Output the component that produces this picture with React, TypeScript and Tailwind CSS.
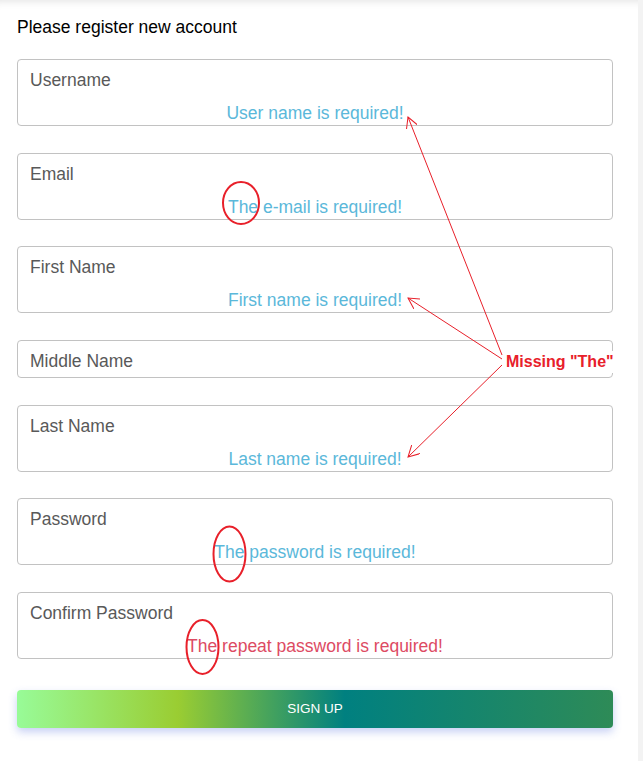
import React from "react";

type Field = { label: string; error?: string; tone?: "info" | "danger" };

const fields: Field[] = [
  { label: "Username", error: "User name is required!" },
  { label: "Email", error: "The e-mail is required!" },
  { label: "First Name", error: "First name is required!" },
  { label: "Middle Name" },
  { label: "Last Name", error: "Last name is required!" },
  { label: "Password", error: "The password is required!" },
  { label: "Confirm Password", error: "The repeat password is required!", tone: "danger" },
];

function FormField({ field }: { field: Field }) {
  return (
    <div
      className={
        field.error
          ? "flex flex-col border border-[#c2c2c2] rounded-[4px] pt-[10px] pb-[2px] px-[12px]"
          : "flex flex-col border border-[#c2c2c2] rounded-[4px] pt-[10px] pb-[6.5px] px-[12px]"
      }
    >
      <span className="text-[17.5px] leading-[20px] text-[#595959]">{field.label}</span>
      {field.error && (
        <span
          className={
            field.tone === "danger"
              ? "mt-[13px] text-center text-[17.5px] leading-[20px] text-[#dd4b63]"
              : "mt-[13px] text-center text-[17.5px] leading-[20px] text-[#5bb8da]"
          }
        >
          {field.error}
        </span>
      )}
    </div>
  );
}

// red review marks drawn on top of the form
function Annotations() {
  const red = "#e8202a";
  return (
    <svg className="absolute inset-0 pointer-events-none" width="643" height="761" viewBox="0 0 643 761">
      <defs>
        <marker id="arrow" viewBox="0 0 12 12" refX="11" refY="6" markerWidth="12" markerHeight="12" orient="auto-start-reverse" markerUnits="userSpaceOnUse">
          <path d="M0 0 L11 6 L0 12" fill="none" stroke={red} strokeWidth="1" />
        </marker>
      </defs>
      <g stroke={red} strokeWidth="1" fill="none">
        <line x1="502" y1="355" x2="408" y2="117" markerEnd="url(#arrow)" />
        <line x1="502" y1="359" x2="408" y2="298" markerEnd="url(#arrow)" />
        <line x1="502" y1="365" x2="408" y2="457" markerEnd="url(#arrow)" />
      </g>
      <g stroke={red} strokeWidth="2" fill="none">
        <ellipse cx="241" cy="203" rx="18" ry="21" />
        <ellipse cx="229.5" cy="554" rx="16" ry="27.5" />
        <ellipse cx="202.5" cy="647" rx="16" ry="27" />
      </g>
    </svg>
  );
}

export default function App() {
  return (
    <div className="relative flex min-h-screen bg-white font-['Liberation_Sans',Arial,sans-serif]">
      <main className="w-[638px] shadow-[inset_0_9px_9px_-8px_rgba(0,0,0,0.12)] pl-[17px] pr-[25px] pt-[17px] pb-[30px]">
        <h1 className="text-[17.5px] leading-[20px] text-black">Please register new account</h1>
        <div className="mt-[22px] flex flex-col gap-[26.5px]">
          {fields.map((f) => (
            <FormField key={f.label} field={f} />
          ))}
        </div>
        <button
          className="mt-[31.5px] w-full h-[38px] rounded-[4px] text-white text-[13.5px] uppercase bg-[linear-gradient(to_right,#98fb98_0%,#9acd32_27%,#008080_55%,#2e8b57_100%)] shadow-[0_4px_8px_rgba(70,100,220,0.3)]"
        >
          Sign up
        </button>
      </main>
      <div className="flex-1 bg-[#f3f3f3]" />
      <span className="absolute left-[506px] top-[351px] text-[16px] leading-[22px] font-bold text-[#e8202a] bg-white font-['Liberation_Sans',Arial,sans-serif]">
        Missing "The"
      </span>
      <Annotations />
    </div>
  );
}
